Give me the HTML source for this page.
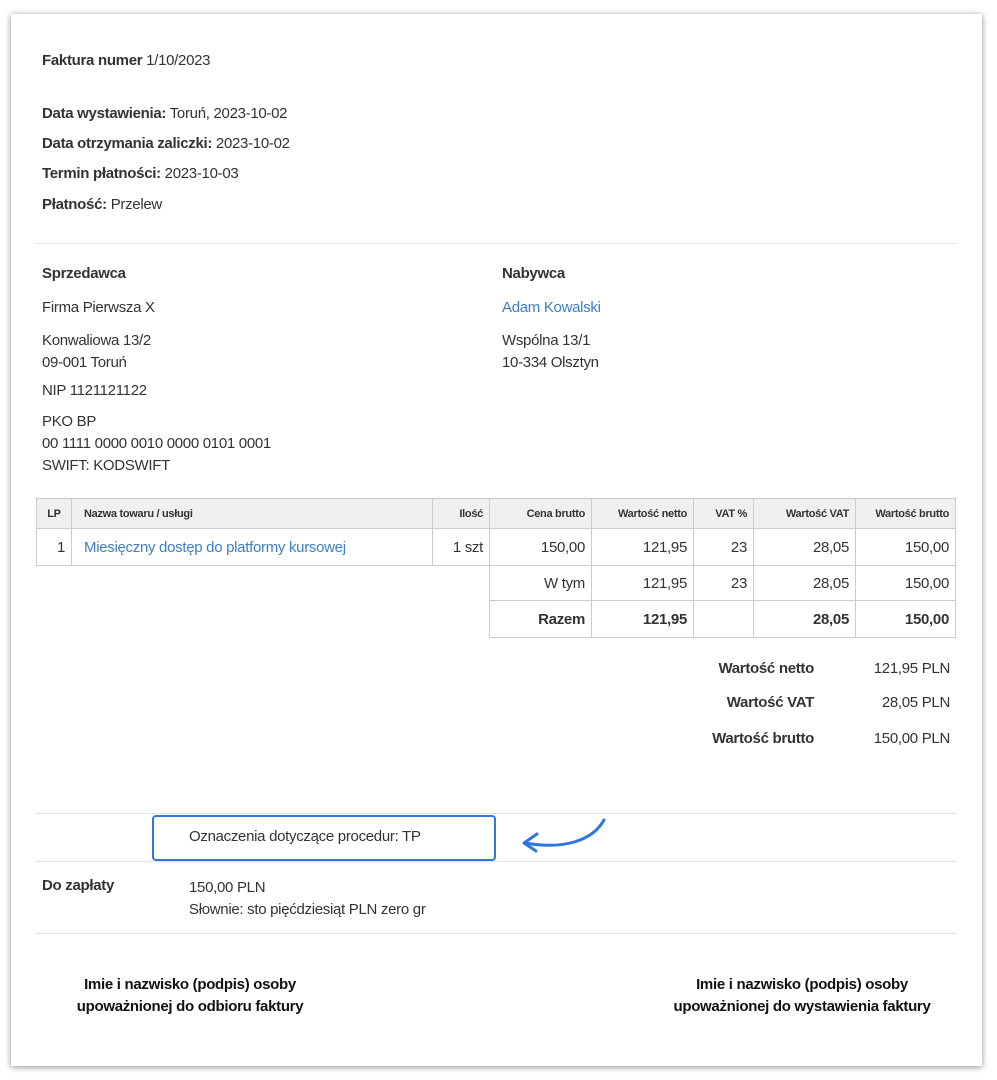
<!DOCTYPE html>
<html><head><meta charset="utf-8"><style>
body{margin:0;background:#fff;font-family:"Liberation Sans",Arial,sans-serif;color:#333;}
.card{position:absolute;left:11px;top:14px;width:971px;height:1052px;background:#fff;box-shadow:0 1px 6px rgba(0,0,0,.45);}
.t{position:absolute;font-size:15px;white-space:nowrap;letter-spacing:-0.3px}
b{font-weight:bold}
.hr{position:absolute;left:36px;width:920px;height:1px;background:#e3e3e3}
table{position:absolute;left:36px;top:498px;border-collapse:collapse;font-size:15px;letter-spacing:-0.3px}
td{border:1px solid #ccc;padding:0 6px;text-align:right;height:35px;box-sizing:border-box}
tr.h td{background:#f0f0f0;font-size:11px;font-weight:bold;height:30px}
a{color:#3d7fc4}
.bl{border-left:none;border-bottom:none}
.nb{border:none}
</style></head><body>
<div class="card"></div>
<div class="t" style="left:42px;top:52px"><b>Faktura numer</b> 1/10/2023</div>
<div class="t" style="left:42px;top:105px"><b>Data wystawienia:</b> Toruń, 2023-10-02</div>
<div class="t" style="left:42px;top:135px"><b>Data otrzymania zaliczki:</b> 2023-10-02</div>
<div class="t" style="left:42px;top:165px"><b>Termin płatności:</b> 2023-10-03</div>
<div class="t" style="left:42px;top:196px"><b>Płatność:</b> Przelew</div>
<div class="hr" style="top:243px"></div>
<div class="t" style="left:42px;top:265px"><b>Sprzedawca</b></div>
<div class="t" style="left:42px;top:299px">Firma Pierwsza X</div>
<div class="t" style="left:42px;top:330px;line-height:22px">Konwaliowa 13/2<br>09-001 Toruń</div>
<div class="t" style="left:42px;top:382px">NIP 1121121122</div>
<div class="t" style="left:42px;top:411px;line-height:22px">PKO BP<br>00 1111 0000 0010 0000 0101 0001<br>SWIFT: KODSWIFT</div>
<div class="t" style="left:502px;top:265px"><b>Nabywca</b></div>
<div class="t" style="left:502px;top:299px;color:#3d7fc4">Adam Kowalski</div>
<div class="t" style="left:502px;top:330px;line-height:22px">Wspólna 13/1<br>10-334 Olsztyn</div>
<table>
<tr class="h"><td style="width:35px;text-align:center">LP</td><td style="width:361px;text-align:left;padding-left:12px">Nazwa towaru / usługi</td><td style="width:57px">Ilość</td><td style="width:102px">Cena brutto</td><td style="width:102px">Wartość netto</td><td style="width:60px">VAT %</td><td style="width:102px">Wartość VAT</td><td style="width:100px">Wartość brutto</td></tr>
<tr style="height:37px"><td>1</td><td style="text-align:left;padding-left:12px;color:#3d7fc4">Miesięczny dostęp do platformy kursowej</td><td>1 szt</td><td>150,00</td><td>121,95</td><td>23</td><td>28,05</td><td>150,00</td></tr>
<tr><td class="nb"></td><td class="nb"></td><td class="nb"></td><td>W tym</td><td>121,95</td><td>23</td><td>28,05</td><td>150,00</td></tr>
<tr style="height:37px"><td class="nb"></td><td class="nb"></td><td class="nb"></td><td><b>Razem</b></td><td><b>121,95</b></td><td></td><td><b>28,05</b></td><td><b>150,00</b></td></tr>
</table>
<div class="t" style="right:183px;top:660px"><b>Wartość netto</b></div>
<div class="t" style="right:47px;top:660px">121,95 PLN</div>
<div class="t" style="right:183px;top:694px"><b>Wartość VAT</b></div>
<div class="t" style="right:47px;top:694px">28,05 PLN</div>
<div class="t" style="right:183px;top:730px"><b>Wartość brutto</b></div>
<div class="t" style="right:47px;top:730px">150,00 PLN</div>
<div class="hr" style="top:813px"></div>
<div style="position:absolute;left:152px;top:815px;width:340px;height:42px;border:2px solid #2f76e0;border-radius:4px"></div>
<div class="t" style="left:189px;top:828px">Oznaczenia dotyczące procedur: TP</div>
<svg style="position:absolute;left:515px;top:815px" width="95" height="40"><path d="M89 5 C78 25 50 35 10 28" fill="none" stroke="#2f76e0" stroke-width="3" stroke-linecap="round"/><path d="M22 19 L9 28 L21 36" fill="none" stroke="#2f76e0" stroke-width="3" stroke-linecap="round" stroke-linejoin="round"/></svg>
<div class="hr" style="top:861px"></div>
<div class="t" style="left:42px;top:877px"><b>Do zapłaty</b></div>
<div class="t" style="left:189px;top:877px;line-height:22px">150,00 PLN<br>Słownie: sto pięćdziesiąt PLN zero gr</div>
<div class="hr" style="top:933px"></div>
<div class="t" style="left:40px;width:300px;top:974px;text-align:center;line-height:22px;color:#111"><b>Imie i nazwisko (podpis) osoby<br>upoważnionej do odbioru faktury</b></div>
<div class="t" style="left:652px;width:300px;top:974px;text-align:center;line-height:22px;color:#111"><b>Imie i nazwisko (podpis) osoby<br>upoważnionej do wystawienia faktury</b></div>
</body></html>
